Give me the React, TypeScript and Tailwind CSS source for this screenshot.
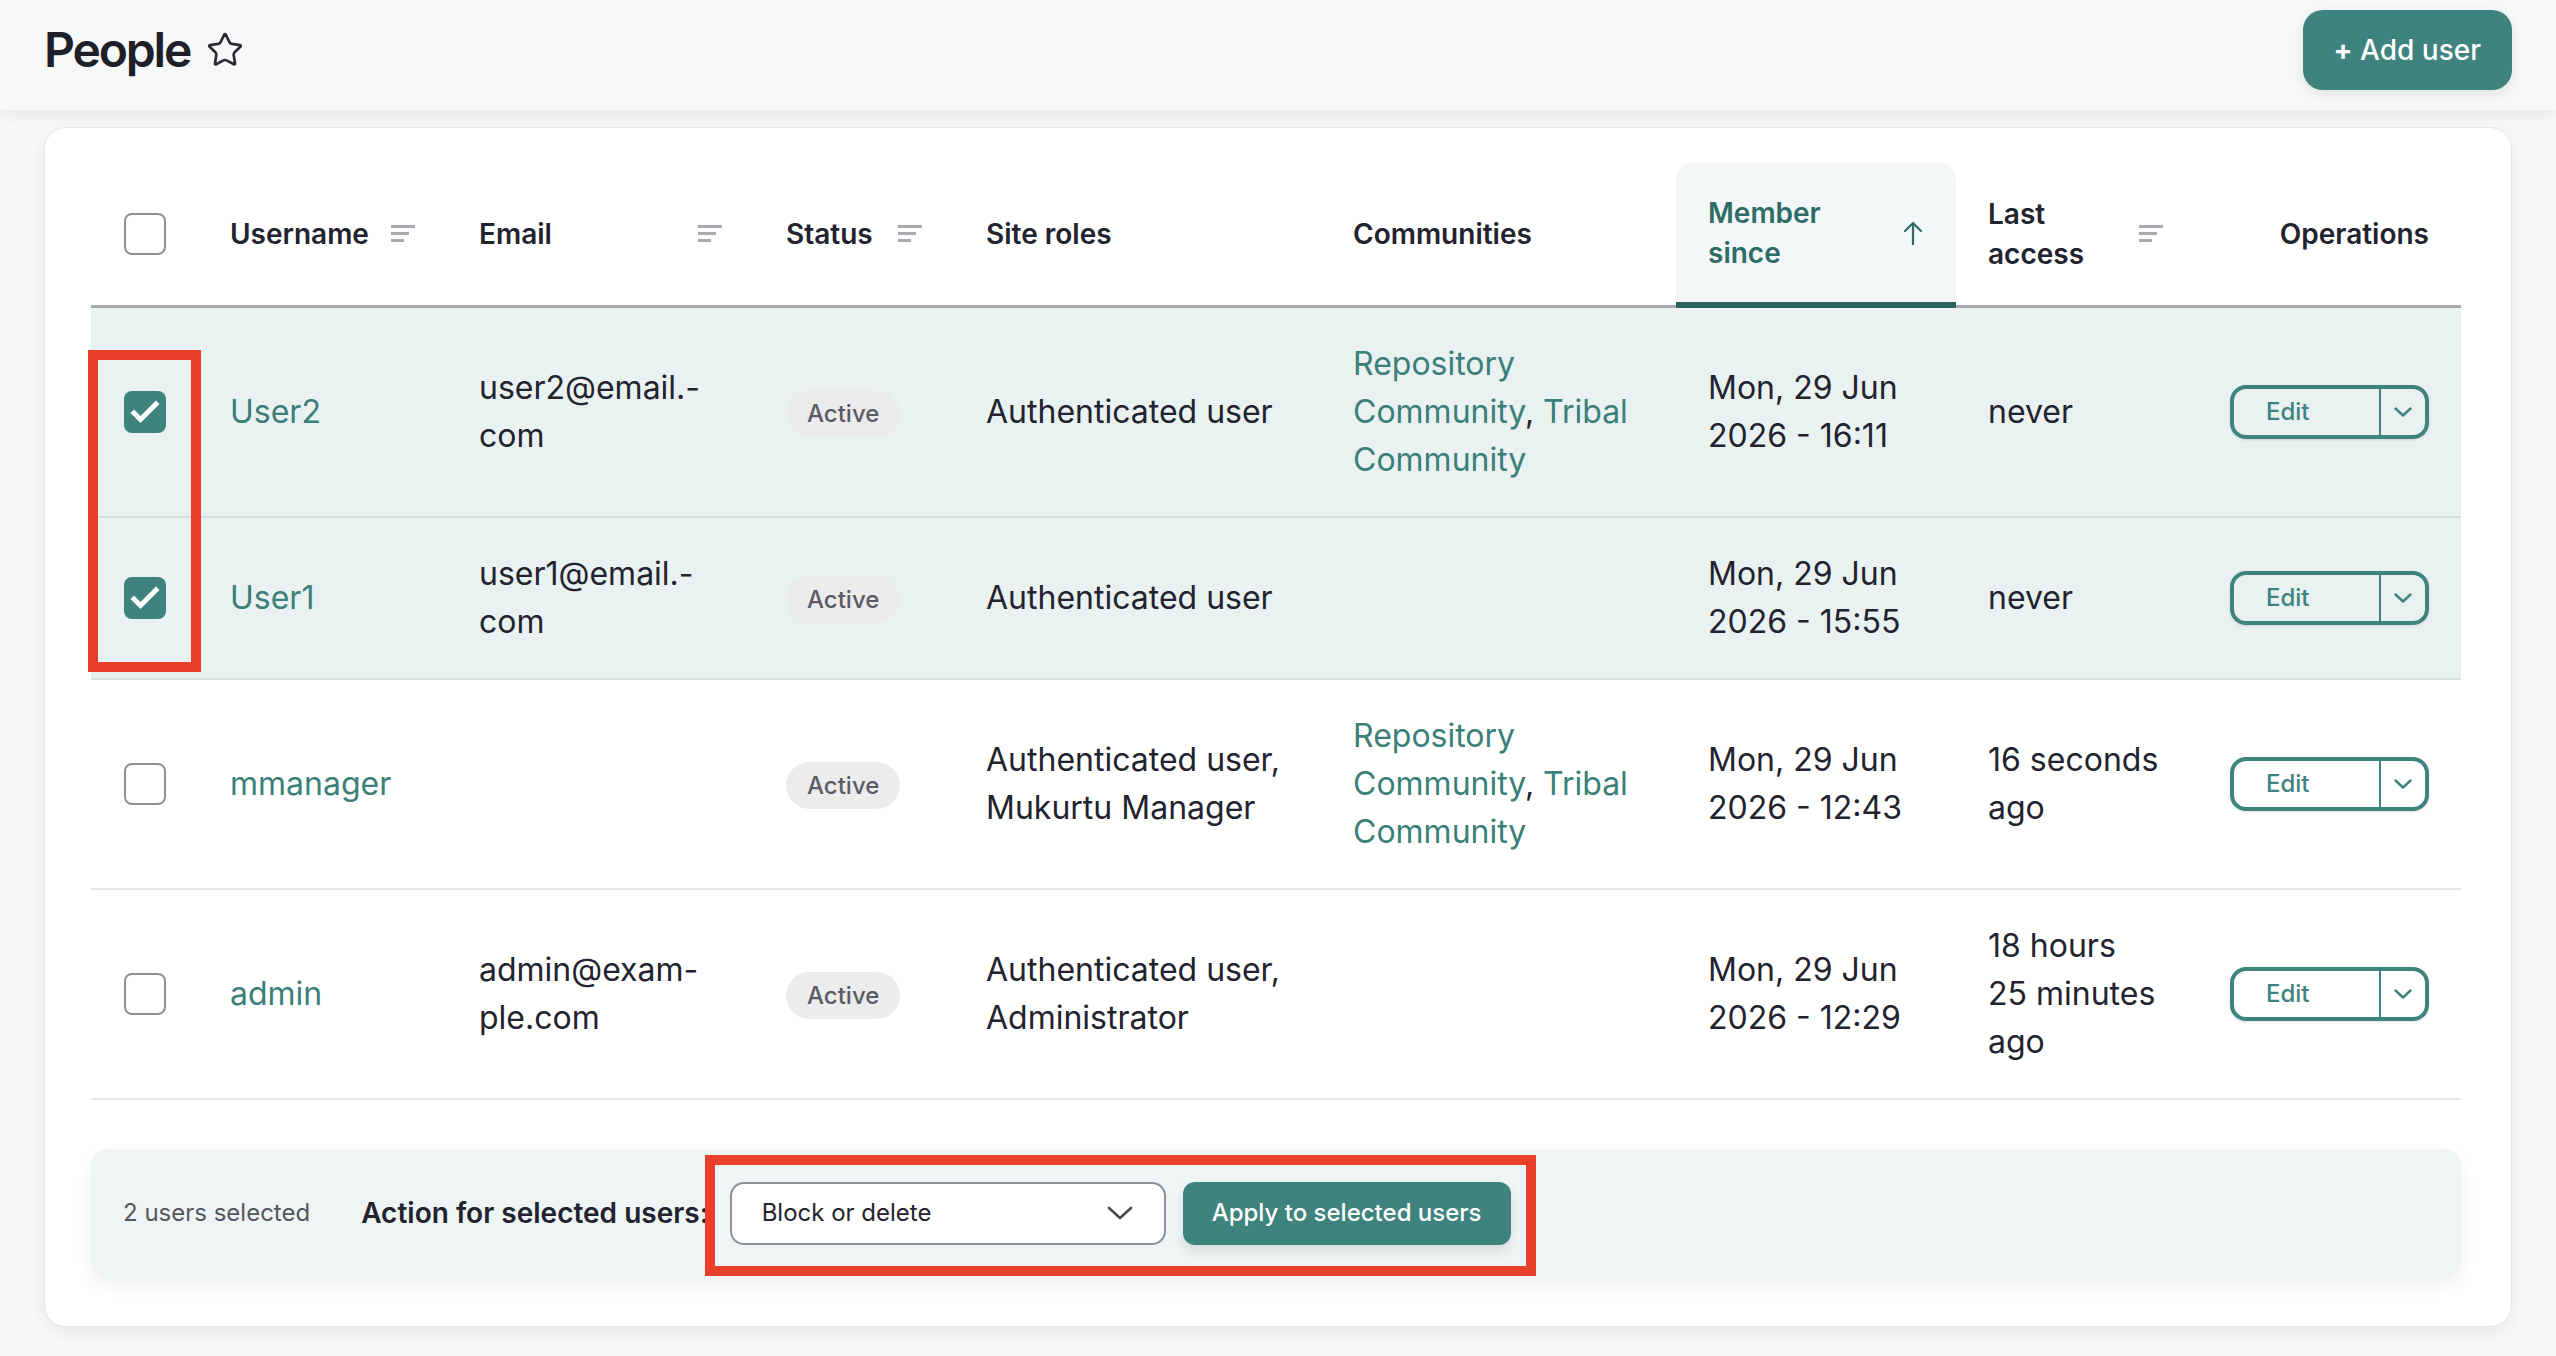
import { Star } from 'lucide-react';

type Row = {
  name: string;
  email: string[];
  roles: string[];
  communities: boolean;
  since: string[];
  access: string[];
  selected: boolean;
};

const ROWS: Row[] = [
  {
    name: 'User2',
    email: ['user2@email.-', 'com'],
    roles: ['Authenticated user'],
    communities: true,
    since: ['Mon, 29 Jun', '2026 - 16:11'],
    access: ['never'],
    selected: true,
  },
  {
    name: 'User1',
    email: ['user1@email.-', 'com'],
    roles: ['Authenticated user'],
    communities: false,
    since: ['Mon, 29 Jun', '2026 - 15:55'],
    access: ['never'],
    selected: true,
  },
  {
    name: 'mmanager',
    email: [],
    roles: ['Authenticated user,', 'Mukurtu Manager'],
    communities: true,
    since: ['Mon, 29 Jun', '2026 - 12:43'],
    access: ['16 seconds', 'ago'],
    selected: false,
  },
  {
    name: 'admin',
    email: ['admin@exam-', 'ple.com'],
    roles: ['Authenticated user,', 'Administrator'],
    communities: false,
    since: ['Mon, 29 Jun', '2026 - 12:29'],
    access: ['18 hours', '25 minutes', 'ago'],
    selected: false,
  },
];

function Checkbox({ checked }: { checked?: boolean }) {
  if (checked) {
    return (
      <span className="block h-[42px] w-[42px] rounded-[8px] bg-[#3e837e]">
        <svg width="42" height="42" viewBox="0 0 42 42" fill="none">
          <path d="M10 22l6.5 6.5L32 13" stroke="white" strokeWidth="5" strokeLinecap="square" />
        </svg>
      </span>
    );
  }
  return <span className="block h-[42px] w-[42px] rounded-[8px] border-2 border-[#8f8f99] bg-white" />;
}

function SortLines() {
  return (
    <svg width="24" height="18" viewBox="0 0 24 18" className="shrink-0">
      <rect x="0" y="0" width="24" height="3" fill="#a9a9b1" />
      <rect x="0" y="7" width="18" height="3" fill="#a9a9b1" />
      <rect x="0" y="14" width="13" height="3" fill="#a9a9b1" />
    </svg>
  );
}

function Lines({ lines }: { lines: string[] }) {
  return (
    <>
      {lines.map((l, i) => (
        <span key={i} className="block whitespace-nowrap">
          {l}
        </span>
      ))}
    </>
  );
}

function EditButton() {
  return (
    <div className="ml-auto flex h-[54px] w-[199px] rounded-[16px] border-4 border-[#3e837e] shadow-[0_1px_3px_rgba(0,0,0,0.12)]">
      <span className="flex flex-1 items-center pl-[32px] text-[24px] font-medium text-[#3e837e]">Edit</span>
      <span className="flex w-[46px] items-center justify-center border-l-2 border-[#3e837e]">
        <svg width="18" height="10" viewBox="0 0 18 10" fill="none">
          <path d="M1.5 1.5L9 8.5l7.5-7" stroke="#3e837e" strokeWidth="2.4" strokeLinecap="round" strokeLinejoin="round" />
        </svg>
      </span>
    </div>
  );
}

export default function App() {
  const th = 'px-[32px] text-left align-middle text-[28px] font-semibold leading-[40px] text-[#22232e] border-b-[3px] border-[#a9aaae]';

  return (
    <div className="relative min-h-[1356px] bg-[#f6f8f8] font-['Inter',sans-serif] text-[#22232e]">
      {/* Page header */}
      <div className="relative z-10 h-[110px] bg-[#f7f9f9] px-[44px] shadow-[0_4px_14px_rgba(0,0,0,0.07)]">
        <div className="flex h-[100px] items-center justify-between">
          <div className="flex items-center gap-[16px]">
            <h1 className="text-[48px] font-semibold leading-none tracking-[-0.045em] text-[#1f1f2a]">People</h1>
            <Star size={38} strokeWidth={1.7} className="text-[#2b2b35]" />
          </div>
          <button className="h-[80px] rounded-[20px] bg-[#3e837e] px-[31px] text-[28px] font-medium text-white shadow-[0_4px_12px_rgba(0,0,0,0.1)]">
            <span className="font-bold">+</span> Add user
          </button>
        </div>
      </div>

      {/* Card */}
      <div className="px-[44px] pt-[17px]">
        <div className="rounded-[22px] border border-[#e4e7e7] bg-white pb-[49px] pl-[46px] pr-[50px] pt-[35px] shadow-[0_6px_16px_rgba(0,0,0,0.06)]">
          <table className="w-full table-fixed border-separate border-spacing-0">
            <colgroup>
              <col className="w-[107px]" />
              <col className="w-[249px]" />
              <col className="w-[307px]" />
              <col className="w-[200px]" />
              <col className="w-[367px]" />
              <col className="w-[355px]" />
              <col className="w-[280px]" />
              <col className="w-[239px]" />
              <col className="w-[266px]" />
            </colgroup>
            <thead>
              <tr className="h-[145px]">
                <th className="border-b-[3px] border-[#a9aaae] pl-[33px] align-middle">
                  <Checkbox />
                </th>
                <th className={th}>
                  <div className="flex items-center justify-between">
                    <span>Username</span>
                    <SortLines />
                  </div>
                </th>
                <th className={th}>
                  <div className="flex items-center justify-between">
                    <span>Email</span>
                    <SortLines />
                  </div>
                </th>
                <th className={th}>
                  <div className="flex items-center justify-between">
                    <span>Status</span>
                    <SortLines />
                  </div>
                </th>
                <th className={th}>Site roles</th>
                <th className={th}>Communities</th>
                <th className="rounded-t-[16px] border-b-[6px] border-[#2c625d] bg-[#f3f7f7] px-[32px] text-left align-middle text-[28px] font-semibold leading-[40px] text-[#2f6c66]">
                  <div className="flex items-center justify-between">
                    <span>
                      Member
                      <br />
                      since
                    </span>
                    <svg width="22" height="24" viewBox="0 0 22 24" fill="none" className="shrink-0">
                      <path d="M11 23V2M3 10l8-8 8 8" stroke="#2f6c66" strokeWidth="2.2" strokeLinecap="round" strokeLinejoin="round" />
                    </svg>
                  </div>
                </th>
                <th className={th}>
                  <div className="flex items-center justify-between">
                    <span>
                      Last
                      <br />
                      access
                    </span>
                    <SortLines />
                  </div>
                </th>
                <th className="border-b-[3px] border-[#a9aaae] px-[32px] text-right align-middle text-[28px] font-semibold leading-[40px] text-[#22232e]">
                  Operations
                </th>
              </tr>
            </thead>
            <tbody>
              {ROWS.map((r) => {
                const td = r.selected
                  ? 'border-b-2 border-[#d4dede] bg-[#e9f1f1] px-[32px] py-[32px] align-middle text-[32px] leading-[48px]'
                  : 'border-b-2 border-[#e3e6e6] bg-white px-[32px] py-[32px] align-middle text-[32px] leading-[48px]';
                return (
                  <tr key={r.name}>
                    <td className={td + ' !pl-[33px] !pr-0'}>
                      <Checkbox checked={r.selected} />
                    </td>
                    <td className={td}>
                      <span className="text-[#3b7f78]">{r.name}</span>
                    </td>
                    <td className={td}>
                      <Lines lines={r.email} />
                    </td>
                    <td className={td}>
                      <span className="inline-flex h-[47px] items-center rounded-full bg-[#ececec] px-[21px] text-[24px] font-medium text-[#5b5b63]">
                        Active
                      </span>
                    </td>
                    <td className={td}>
                      <Lines lines={r.roles} />
                    </td>
                    <td className={td}>
                      {r.communities && (
                        <span className="block whitespace-nowrap">
                          <a className="text-[#3b7f78]">
                            Repository
                            <br />
                            Community
                          </a>
                          , <a className="text-[#3b7f78]">Tribal
                            <br />
                            Community</a>
                        </span>
                      )}
                    </td>
                    <td className={td}>
                      <Lines lines={r.since} />
                    </td>
                    <td className={td}>
                      <Lines lines={r.access} />
                    </td>
                    <td className={td}>
                      <EditButton />
                    </td>
                  </tr>
                );
              })}
            </tbody>
          </table>

          {/* Bulk actions */}
          <div className="mt-[49px] flex h-[128px] items-center rounded-[16px] bg-[#eff5f5] pl-[32px] shadow-[0_8px_18px_rgba(0,0,0,0.06)]">
            <span className="text-[24px] text-[#55555f]">2 users selected</span>
            <span className="ml-[51px] text-[28px] font-semibold text-[#22232e]">Action for selected users:</span>
            <div className="ml-[21px] flex h-[63px] w-[436px] items-center justify-between rounded-[14px] border-2 border-[#8f8f99] bg-white pl-[30px] pr-[31px]">
              <span className="text-[24px] text-[#22232e]">Block or delete</span>
              <svg width="26" height="14" viewBox="0 0 26 14" fill="none">
                <path d="M2 2l11 10L24 2" stroke="#4a4a55" strokeWidth="2.6" strokeLinecap="round" strokeLinejoin="round" />
              </svg>
            </div>
            <button className="ml-[17px] h-[63px] rounded-[12px] bg-[#3e837e] px-[29px] text-[24px] font-medium text-white shadow-[0_6px_12px_rgba(0,0,0,0.1)]">
              Apply to selected users
            </button>
          </div>
        </div>
      </div>

      {/* Annotation overlays */}
      <div className="pointer-events-none absolute left-[88px] top-[350px] h-[322px] w-[113px] border-[10px] border-[#e8402a]" />
      <div className="pointer-events-none absolute left-[705px] top-[1155px] h-[121px] w-[831px] border-[10px] border-[#e8402a]" />
    </div>
  );
}
